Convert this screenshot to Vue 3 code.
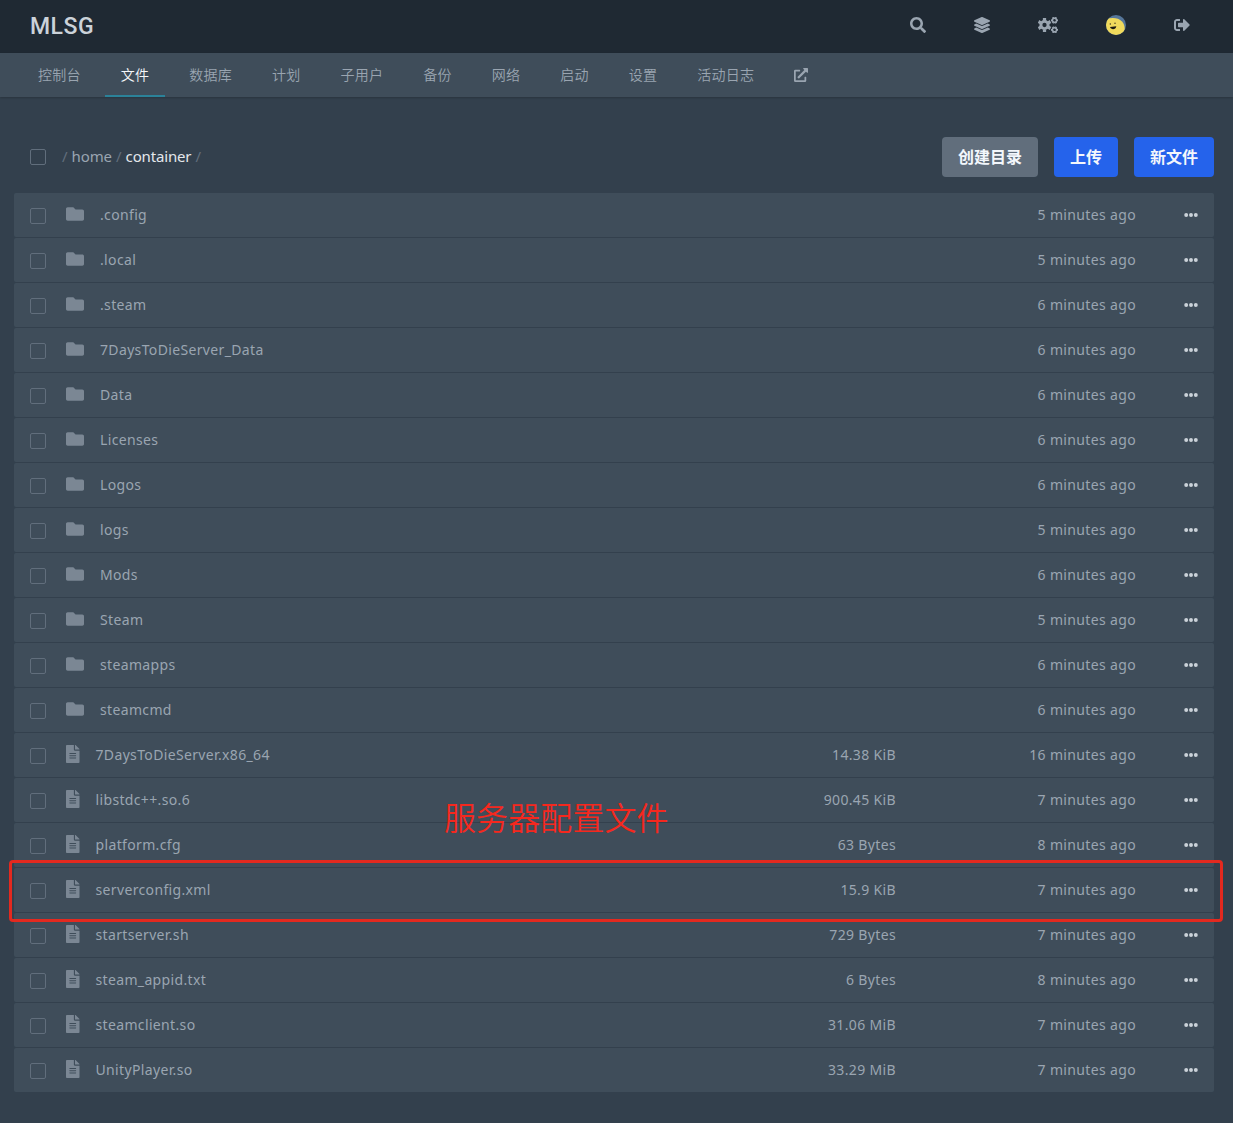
<script setup>
const tabs = ['控制台', '文件', '数据库', '计划', '子用户', '备份', '网络', '启动', '设置', '活动日志']

const dir = (name, min) => ({ name, dir: true, size: '', time: `${min} minutes ago` })
const file = (name, size, min) => ({ name, dir: false, size, time: `${min} minutes ago` })

const entries = [
  dir('.config', 5),
  dir('.local', 5),
  dir('.steam', 6),
  dir('7DaysToDieServer_Data', 6),
  dir('Data', 6),
  dir('Licenses', 6),
  dir('Logos', 6),
  dir('logs', 5),
  dir('Mods', 6),
  dir('Steam', 5),
  dir('steamapps', 6),
  dir('steamcmd', 6),
  file('7DaysToDieServer.x86_64', '14.38 KiB', 16),
  file('libstdc++.so.6', '900.45 KiB', 7),
  file('platform.cfg', '63 Bytes', 8),
  file('serverconfig.xml', '15.9 KiB', 7),
  file('startserver.sh', '729 Bytes', 7),
  file('steam_appid.txt', '6 Bytes', 8),
  file('steamclient.so', '31.06 MiB', 7),
  file('UnityPlayer.so', '33.29 MiB', 7),
]

const teeth = [0, 60, 120]
</script>

<template>
  <div class="page">
    <header class="topbar">
      <div class="brand">MLSG</div>
      <nav class="actions">
        <a class="a-search"><svg width="16" height="16" viewBox="0 0 512 512"><path d="M505 442.7L405.3 343c-4.5-4.5-10.6-7-17-7H372c27.6-35.3 44-79.7 44-128C416 93.1 322.9 0 208 0S0 93.1 0 208s93.1 208 208 208c48.3 0 92.7-16.4 128-44v16.3c0 6.4 2.5 12.5 7 17l99.7 99.7c9.4 9.4 24.6 9.4 33.9 0l28.3-28.3c9.4-9.4 9.4-24.6.1-34zM208 336c-70.7 0-128-57.2-128-128 0-70.7 57.2-128 128-128 70.7 0 128 57.2 128 128 0 70.7-57.2 128-128 128z" /></svg></a>
        <a class="a-layers"><svg width="16" height="16" viewBox="0 0 512 512"><path d="M12.41 148.02l232.94 105.67c6.8 3.09 14.49 3.09 21.29 0l232.94-105.67c16.55-7.51 16.55-32.52 0-40.03L266.65 2.31a25.607 25.607 0 0 0-21.29 0L12.41 107.98c-16.55 7.51-16.55 32.53 0 40.04zm487.18 88.28l-58.09-26.33-161.64 73.27c-7.56 3.43-15.59 5.17-23.86 5.17s-16.29-1.74-23.86-5.17L70.51 209.97l-58.1 26.33c-16.55 7.5-16.55 32.5 0 40l232.94 105.59c6.8 3.08 14.49 3.08 21.29 0L499.59 276.3c16.55-7.5 16.55-32.5 0-40zm0 127.8l-57.87-26.23-161.86 73.37c-7.56 3.43-15.59 5.17-23.86 5.17s-16.29-1.74-23.86-5.17L70.29 337.87 12.41 364.1c-16.55 7.5-16.55 32.5 0 40l232.94 105.59c6.8 3.08 14.49 3.08 21.29 0L499.59 404.1c16.55-7.5 16.55-32.5 0-40z" /></svg></a>
        <a class="a-cogs">
          <svg width="20" height="16" viewBox="0 0 640 512" fill="none" stroke="currentColor">
            <g transform="translate(208 256)">
              <circle r="116" stroke-width="94" />
              <g v-for="t in teeth" :key="t" :transform="`rotate(${t})`" stroke-width="104">
                <path d="M0-222V-140M0 140V222" />
              </g>
            </g>
            <g v-for="y in [104, 408]" :key="y" :transform="`translate(528 ${y}) rotate(30)`">
              <circle r="66" stroke-width="50" />
              <g v-for="t in teeth" :key="t" :transform="`rotate(${t})`" stroke-width="56">
                <path d="M0-112V-76M0 76V112" />
              </g>
            </g>
          </svg>
        </a>
        <a class="a-avatar">
          <svg width="20" height="20" viewBox="0 0 20 20">
            <defs><clipPath id="avatar-clip"><circle cx="10" cy="10" r="10" /></clipPath></defs>
            <g clip-path="url(#avatar-clip)">
              <rect width="20" height="20" fill="#56769a" />
              <path d="M-1 5C5 2 12 2.500 16 6.500C19 10 19.500 14 17.500 20H-1Z" fill="#f0da5c" />
              <circle cx="4.300" cy="9" r=".7" fill="#3a3420" />
              <circle cx="9" cy="8.300" r=".7" fill="#3a3420" />
              <path d="M4 12.100L10.300 11.200C10 14.800 5 15.200 4 12.100Z" fill="#1c1a14" />
            </g>
          </svg>
        </a>
        <a class="a-out"><svg width="16" height="16" viewBox="0 0 512 512"><path d="M497 273L329 441c-15 15-41 4.500-41-17v-96H152c-13.300 0-24-10.700-24-24v-96c0-13.300 10.700-24 24-24h136V88c0-21.400 25.900-32 41-17l168 168c9.300 9.400 9.300 24.600 0 34zM192 436v-40c0-6.600-5.400-12-12-12H96c-17.700 0-32-14.300-32-32V160c0-17.700 14.300-32 32-32h84c6.600 0 12-5.400 12-12V76c0-6.600-5.400-12-12-12H96c-53 0-96 43-96 96v192c0 53 43 96 96 96h84c6.600 0 12-5.400 12-12z" /></svg></a>
      </nav>
    </header>

    <nav class="tabs">
      <a v-for="(t, i) in tabs" :key="t" :class="{ active: i === 1 }">{{ t }}</a>
      <a class="external"><svg width="14" height="14" viewBox="0 0 512 512"><path d="M432,320H400a16,16,0,0,0-16,16V448H64V128H208a16,16,0,0,0,16-16V80a16,16,0,0,0-16-16H48A48,48,0,0,0,0,112V464a48,48,0,0,0,48,48H400a48,48,0,0,0,48-48V336A16,16,0,0,0,432,320ZM488,0h-128c-21.370,0-32.050,25.910-17,41l35.730,35.730L135,320.370a24,24,0,0,0,0,34L157.670,377a24,24,0,0,0,34,0L435.280,133.320,471,169c15,15,41,4.500,41-17V24A24,24,0,0,0,488,0Z" /></svg></a>
    </nav>

    <main class="content">
      <div class="toolbar">
        <span class="check"></span>
        <div class="crumbs">/<a>home</a>/<a class="here">container</a>/</div>
        <div class="buttons">
          <button class="gray">创建目录</button>
          <button>上传</button>
          <button>新文件</button>
        </div>
      </div>

      <div class="list">
        <div v-for="e in entries" :key="e.name" class="row">
          <span class="check"></span>
          <span class="icon" :class="{ folder: e.dir }">
            <svg v-if="e.dir" width="18" height="18" viewBox="0 0 512 512"><path d="M464 128H272l-64-64H48C21.490 64 0 85.490 0 112v288c0 26.510 21.490 48 48 48h416c26.510 0 48-21.490 48-48V176c0-26.510-21.490-48-48-48z" /></svg>
            <svg v-else width="13.500" height="18" viewBox="0 0 384 512"><path d="M224 136V0H24C10.700 0 0 10.700 0 24v464c0 13.300 10.700 24 24 24h336c13.300 0 24-10.700 24-24V160H248c-13.200 0-24-10.800-24-24zm64 236c0 6.600-5.400 12-12 12H108c-6.600 0-12-5.400-12-12v-8c0-6.600 5.400-12 12-12h168c6.600 0 12 5.400 12 12v8zm0-64c0 6.600-5.400 12-12 12H108c-6.600 0-12-5.400-12-12v-8c0-6.600 5.400-12 12-12h168c6.600 0 12 5.400 12 12v8zm0-72v8c0 6.600-5.400 12-12 12H108c-6.600 0-12-5.400-12-12v-8c0-6.600 5.400-12 12-12h168c6.600 0 12 5.400 12 12zm96-114.100v6.100H256V0h6.100c6.400 0 12.500 2.500 17 7l97.900 98c4.500 4.500 7 10.600 7 16.900z" /></svg>
          </span>
          <span class="name">{{ e.name }}</span>
          <span class="size">{{ e.size }}</span>
          <span class="time">{{ e.time }}</span>
          <span class="more"><svg width="14" height="14" viewBox="0 0 512 512"><circle cx="80" cy="256" r="72" /><circle cx="256" cy="256" r="72" /><circle cx="432" cy="256" r="72" /></svg></span>
        </div>
      </div>
    </main>

    <div class="note">服务器配置文件</div>
    <div class="marker"></div>
  </div>
</template>

<style>
body {
  background: #33404d;
}
</style>

<style scoped>
.page {
  position: relative;
  height: 1123px;
  overflow: hidden;
  background: #33404d;
  color: #9aa5b1;
  font-family: "Noto Sans", "Noto Sans CJK SC", sans-serif;
}
svg {
  display: block;
  fill: currentColor;
}
.a-cogs svg {
  fill: none;
}
.topbar {
  display: flex;
  align-items: flex-start;
  justify-content: space-between;
  height: 53px;
  background: #1f2933;
}
.brand {
  margin-left: 30px;
  font: 500 23px/53px Roboto, sans-serif;
  letter-spacing: 0.5px;
  color: #cbd2d9;
}
.actions {
  display: flex;
  gap: 48px;
  align-items: center;
  height: 50px;
  margin-right: 43px;
}
.tabs {
  display: flex;
  gap: 8px;
  height: 44px;
  padding-left: 22px;
  background: #3f4d5a;
  box-shadow: 0 1px 2px rgba(0, 0, 0, 0.2);
}
.tabs a {
  display: flex;
  align-items: center;
  box-sizing: border-box;
  height: 44px;
  padding: 0 16px 2px;
  font: 350 14px "Noto Sans CJK SC", sans-serif;
  letter-spacing: 0.25px;
}
.tabs .external {
  padding-bottom: 0;
}
.tabs .active {
  color: #f5f7fa;
  box-shadow: inset 0 -2px #2b8299;
}
.content {
  width: 1200px;
  margin: 40px 0 0 14px;
}
.toolbar {
  display: flex;
  align-items: center;
  height: 40px;
  margin-bottom: 16px;
}
.check {
  flex: none;
  box-sizing: border-box;
  width: 16px;
  height: 16px;
  margin-left: 16px;
  border: 1px solid #616e7c;
  border-radius: 2px;
}
.crumbs {
  flex: 1;
  margin-left: 16px;
  padding-bottom: 2px;
  font-size: 15px;
  letter-spacing: -0.16px;
  color: #616e7c;
}
.crumbs a {
  margin: 0 4.2px;
  color: #9aa5b1;
}
.crumbs .here {
  color: #e4e7eb;
}
.buttons {
  display: flex;
  gap: 16px;
}
button {
  height: 40px;
  padding: 0 16px 2px;
  border: 0;
  border-radius: 4px;
  background: #2563eb;
  color: #f3f7fc;
  font: 700 16px/24px "Noto Sans CJK SC", sans-serif;
}
button.gray {
  background: #616e7c;
}
.list {
  display: flex;
  flex-direction: column;
  gap: 1px;
}
.row {
  display: flex;
  align-items: center;
  height: 44px;
  border-radius: 2px;
  background: #3f4d5a;
  font-size: 14px;
  letter-spacing: 0.35px;
}
.row .check {
  margin-top: 1px;
}
.icon {
  width: 29.5px;
  margin: -2px 0 0 20px;
  color: #7b8794;
}
.icon.folder {
  width: 34px;
}
.name,
.size,
.time {
  padding-bottom: 2px;
}
.name {
  flex: 1;
}
.size,
.time {
  text-align: right;
}
.time {
  width: 240px;
}
.more {
  margin: 0 16px 0 48px;
  color: #cbd2d9;
}
.note {
  position: absolute;
  top: 793px;
  left: 444px;
  font: 350 32px/46px "Noto Sans CJK SC", sans-serif;
  letter-spacing: 0.1px;
  color: #f5281e;
}
.marker {
  position: absolute;
  top: 860px;
  left: 9px;
  box-sizing: border-box;
  width: 1214px;
  height: 62px;
  border: 3px solid #e3291f;
  border-radius: 4px;
}
</style>
